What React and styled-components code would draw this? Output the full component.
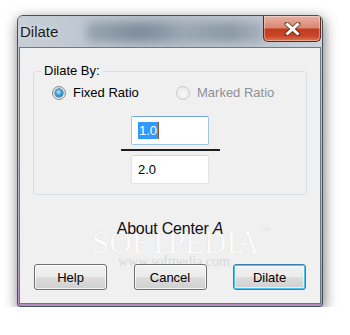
import React from 'react'
import styled, { createGlobalStyle } from 'styled-components'

const GlobalStyle = createGlobalStyle`
  body {
    margin: 0;
    background: #ffffff;
    font-family: 'Liberation Sans', Arial, sans-serif;
  }
`

const App = () => {
  return (
    <>
      <GlobalStyle />
      <Page>
        <Window>
          <TitleBar>
            <TitleBlur aria-hidden="true" />
            <Title>Dilate</Title>
            <CloseButton aria-label="Close">
              <svg width="17" height="14" viewBox="0 0 17 14">
                <path d="M3 2 L14 12 M14 2 L3 12" stroke="#3a1a14" strokeWidth="5" strokeLinecap="round" opacity="0.55" />
                <path d="M3.5 2.5 L13.5 11.5 M13.5 2.5 L3.5 11.5" stroke="#ffffff" strokeWidth="3" strokeLinecap="square" />
              </svg>
            </CloseButton>
          </TitleBar>
          <Client>
            <Watermark>SOFTPEDIA<sup>™</sup></Watermark>
            <WatermarkUrl>www.softpedia.com</WatermarkUrl>
            <GroupBox>
              <Legend>Dilate By:</Legend>
              <RadioRow>
                <RadioOption $width={124}>
                  <RadioDot $checked />
                  <span>Fixed Ratio</span>
                </RadioOption>
                <RadioOption $disabled>
                  <RadioDot $disabled />
                  <span>Marked Ratio</span>
                </RadioOption>
              </RadioRow>
              <Fraction>
                <TextBox $focused>
                  <Selected>1.0</Selected>
                </TextBox>
                <FractionLine />
                <TextBox>2.0</TextBox>
              </Fraction>
            </GroupBox>
            <About>
              About Center <i>A</i>
            </About>
            <ButtonRow>
              <Button>Help</Button>
              <Button>Cancel</Button>
              <Button $default>Dilate</Button>
            </ButtonRow>
          </Client>
        </Window>
      </Page>
    </>
  )
}

export default App

const Page = styled.div`
  padding: 15px 0 0 17px;
`

const Window = styled.div`
  width: 306px;
  height: 292px;
  box-sizing: border-box;
  display: flex;
  flex-direction: column;
  border: 1px solid #47515c;
  border-radius: 6px 6px 3px 3px;
  background: linear-gradient(to bottom, #c2cad2 0%, #b3bec9 50%, #b8a7c6 85%, #b48cc2 100%);
  box-shadow: 1px 4px 14px rgba(0, 0, 0, 0.55);
  overflow: hidden;
`

const TitleBar = styled.div`
  position: relative;
  height: 31px;
  flex: none;
  display: flex;
  align-items: flex-start;
  justify-content: space-between;
  padding-left: 2px;
  padding-right: 1px;
  background: linear-gradient(to right, rgba(200, 207, 214, 0.9), rgba(176, 187, 198, 0.7) 45%, rgba(190, 198, 207, 0.75) 80%, rgba(205, 211, 217, 0.9));
  overflow: hidden;
`

// blurred glass behind the caption
const TitleBlur = styled.span`
  position: absolute;
  left: 68px;
  top: 6px;
  width: 180px;
  height: 20px;
  border-radius: 6px;
  background: linear-gradient(to right, rgba(90, 108, 128, 0.35), rgba(70, 88, 110, 0.5) 30%, rgba(90, 108, 128, 0.3) 55%, rgba(80, 98, 118, 0.45) 80%, rgba(90, 108, 128, 0.2));
  filter: blur(4px);
  pointer-events: none;
`

const Title = styled.span`
  position: relative;
  align-self: center;
  font-size: 15px;
  color: #1b1b1b;
  text-shadow: 0 0 6px rgba(255, 255, 255, 0.7);
`

const CloseButton = styled.div`
  position: relative;
  width: 58px;
  height: 26px;
  box-sizing: border-box;
  display: flex;
  align-items: center;
  justify-content: center;
  border: 1px solid #5a2a22;
  border-top: none;
  border-radius: 0 0 5px 5px;
  background: linear-gradient(to bottom, #e9b1a4 0%, #d98670 48%, #c03a1e 52%, #c9452a 80%, #dd7a55 100%);
  box-shadow: inset 0 0 0 1px rgba(255, 255, 255, 0.35);
`

const Client = styled.div`
  position: relative;
  flex: 1;
  margin: 0 1px 2px 1px;
  display: flex;
  flex-direction: column;
  border: 1px solid #6d7985;
  background: #f0f0f0;
  padding: 15px 13px 13px 13px;
  font-size: 13px;
  color: #000000;
`

const Watermark = styled.div`
  position: absolute;
  left: 72px;
  top: 165px;
  font-family: 'Liberation Serif', serif;
  font-size: 31px;
  line-height: 36px;
  color: #fbfbfb;
  text-shadow: 0 0 1px rgba(0, 0, 0, 0.14);
  pointer-events: none;

  sup {
    font-family: 'Liberation Sans', sans-serif;
    font-size: 8px;
    vertical-align: 20px;
    margin-left: 3px;
    color: #e4e4e4;
    text-shadow: none;
  }
`

const WatermarkUrl = styled.div`
  position: absolute;
  left: 98px;
  top: 206px;
  font-family: 'Liberation Serif', serif;
  font-size: 14px;
  color: rgba(190, 190, 190, 0.5);
  pointer-events: none;
`

const GroupBox = styled.fieldset`
  position: relative;
  margin: 0;
  min-width: 0;
  padding: 6px 0 10px 0;
  border: 1px solid #d5dfe5;
  border-radius: 3px;
`

const Legend = styled.legend`
  margin-left: 7px;
  padding: 0 3px;
  font-size: 13px;
  line-height: 16px;
`

const RadioRow = styled.div`
  display: flex;
  padding-left: 18px;
  height: 16px;
`

const RadioOption = styled.label`
  display: flex;
  align-items: center;
  gap: 7px;
  width: ${p => (p.$width ? `${p.$width}px` : 'auto')};
  color: ${p => (p.$disabled ? '#8d9197' : '#000000')};
  line-height: 16px;
`

const RadioDot = styled.span`
  position: relative;
  flex: none;
  width: 14px;
  height: 14px;
  box-sizing: border-box;
  border-radius: 50%;
  border: 1px solid ${p => (p.$disabled ? '#c8cacc' : '#8a8d90')};
  background: ${p =>
    p.$disabled
      ? 'radial-gradient(circle at 50% 60%, #f7f7f7, #e6e6e6)'
      : 'radial-gradient(circle at 50% 60%, #fafafa, #d2d4d6)'};

  &::after {
    content: '';
    display: ${p => (p.$checked ? 'block' : 'none')};
    position: absolute;
    left: 2px;
    top: 2px;
    width: 8px;
    height: 8px;
    border-radius: 50%;
    background: radial-gradient(circle at 45% 40%, #b8ecff 0%, #3d9ee0 45%, #165a93 100%);
    box-shadow: 0 0 0 0.5px #1d4f7a;
  }
`

const Fraction = styled.div`
  display: flex;
  flex-direction: column;
  align-items: center;
  margin-top: 15px;
`

const TextBox = styled.div`
  width: 78px;
  height: 29px;
  box-sizing: border-box;
  display: flex;
  align-items: center;
  padding-left: 6px;
  background: #ffffff;
  border: 1px solid ${p => (p.$focused ? '#9fc4e6' : '#e0e4ea')};
  border-top-color: ${p => (p.$focused ? '#6fa5d8' : '#d3d7dd')};
  border-radius: 2px;
  font-size: 13px;
`

const Selected = styled.span`
  background: #3399ff;
  color: #ffffff;
  padding: 1px 1px;
  line-height: 15px;
  border-right: 1px solid #8a5a20;
`

const FractionLine = styled.div`
  width: 99px;
  height: 2px;
  margin: 4px 0;
  background: #1e1e1e;
`

const About = styled.div`
  position: relative;
  margin-top: 25px;
  text-align: center;
  font-size: 16px;
  line-height: 18px;
  letter-spacing: -0.2px;
  color: #111111;

  i {
    font-style: italic;
  }
`

const ButtonRow = styled.div`
  position: relative;
  margin-top: auto;
  display: flex;
  justify-content: space-between;
  padding: 0 1px;
`

const Button = styled.div`
  width: 73px;
  height: 26px;
  box-sizing: border-box;
  display: flex;
  align-items: center;
  justify-content: center;
  border: 1px solid ${p => (p.$default ? '#3c7fb1' : '#707070')};
  border-radius: 3px;
  background: linear-gradient(to bottom, #f2f2f2 0%, #ebebeb 50%, #dddddd 51%, #cfcfcf 100%);
  box-shadow: ${p =>
    p.$default
      ? 'inset 0 0 0 1px #4fc3f0, inset 0 0 0 2px rgba(255, 255, 255, 0.6)'
      : 'inset 0 0 0 1px rgba(255, 255, 255, 0.75)'};
  font-size: 13px;
  color: #000000;
`
